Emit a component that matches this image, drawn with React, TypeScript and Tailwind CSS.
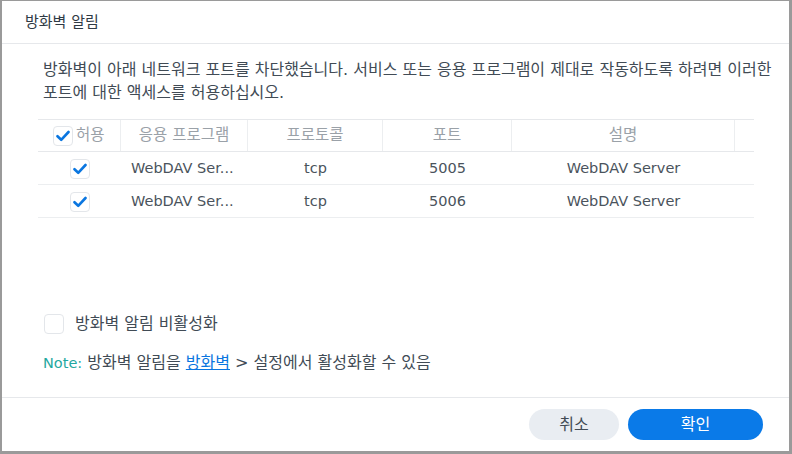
import React from 'react';

const font = { fontFamily: '"DejaVu Sans", "Noto Sans CJK KR", sans-serif' };

function Check({ checked }: { checked: boolean }) {
  return (
    <span className="inline-flex h-[20px] w-[20px] shrink-0 items-center justify-center rounded-[4px] border border-[#e3e6ea] bg-white">
      {checked && (
        <svg width="14" height="12" viewBox="0 0 14 12" fill="none">
          <path d="M1.5 6.2 L5.2 9.8 L12.5 2" stroke="#0a76e0" strokeWidth="2.6" strokeLinecap="round" strokeLinejoin="round" />
        </svg>
      )}
    </span>
  );
}

const rows = [
  { app: 'WebDAV Ser...', proto: 'tcp', port: '5005', desc: 'WebDAV Server' },
  { app: 'WebDAV Ser...', proto: 'tcp', port: '5006', desc: 'WebDAV Server' },
];

export default function App() {
  return (
    <div className="h-[454px] w-[792px] bg-[#9a9a9a] pr-[3px] pb-[3px] pl-[2px] pt-[1px]" style={font}>
      <div className="flex h-full flex-col bg-white text-[#414b55]">
        <div className="flex h-[43px] items-center border-b border-[#e6e8eb] pl-[23px] text-[15px] text-[#2f3a44]">
          방화벽 알림
        </div>

        <div className="flex flex-1 flex-col px-[36px]">
          <p className="mt-[14px] w-[740px] pl-[5px] text-[16px] leading-[23px]">
            방화벽이 아래 네트워크 포트를 차단했습니다. 서비스 또는 응용 프로그램이 제대로 작동하도록 하려면 이러한
            포트에 대한 액세스를 허용하십시오.
          </p>

          <div className="mt-[15px] w-[716px] text-[14.5px]">
            <div className="flex h-[33px] items-center border-y border-[#e6e8eb] text-[15.5px] text-[#9aa1a8]">
              <div className="flex w-[83px] items-center gap-[3px] self-stretch border-r border-[#eceef0] pl-[15px]">
                <Check checked />
                <span>허용</span>
              </div>
              <div className="flex w-[127px] items-center justify-center self-stretch border-r border-[#eceef0]">응용 프로그램</div>
              <div className="flex w-[135px] items-center justify-center self-stretch border-r border-[#eceef0]">프로토콜</div>
              <div className="flex w-[129px] items-center justify-center self-stretch border-r border-[#eceef0]">포트</div>
              <div className="flex w-[223px] items-center justify-center self-stretch border-r border-[#eceef0]">설명</div>
              <div className="flex-1" />
            </div>
            {rows.map((r) => (
              <div key={r.port} className="flex h-[33px] items-center border-b border-[#eceef0] pt-[2px] text-[#4a535c]">
                <div className="flex w-[83px] justify-center pl-[1px]">
                  <Check checked />
                </div>
                <div className="w-[127px] pl-[10px]">{r.app}</div>
                <div className="w-[135px] text-center">{r.proto}</div>
                <div className="w-[129px] text-center">{r.port}</div>
                <div className="w-[223px] text-center">{r.desc}</div>
              </div>
            ))}
          </div>

          <div className="mt-auto flex items-center gap-[11px] pl-[6px] text-[16px]">
            <Check checked={false} />
            <span>방화벽 알림 비활성화</span>
          </div>
          <div className="mb-[22px] mt-[15px] pl-[5px] text-[16px]">
            <span className="text-[14.5px] text-[#1fa8a0]">Note:</span> 방화벽 알림을{' '}
            <span className="text-[#0a76e0] underline">방화벽</span> &gt; 설정에서 활성화할 수 있음
          </div>
        </div>

        <div className="flex h-[54px] items-center justify-end gap-[9px] border-t border-[#e6e8eb] pr-[26px]">
          <button className="h-[31px] w-[90px] rounded-full bg-[#e9edf2] text-[16px] text-[#414b55]">취소</button>
          <button className="h-[31px] w-[135px] rounded-full bg-[#0a7ae8] text-[16px] text-white">확인</button>
        </div>
      </div>
    </div>
  );
}
